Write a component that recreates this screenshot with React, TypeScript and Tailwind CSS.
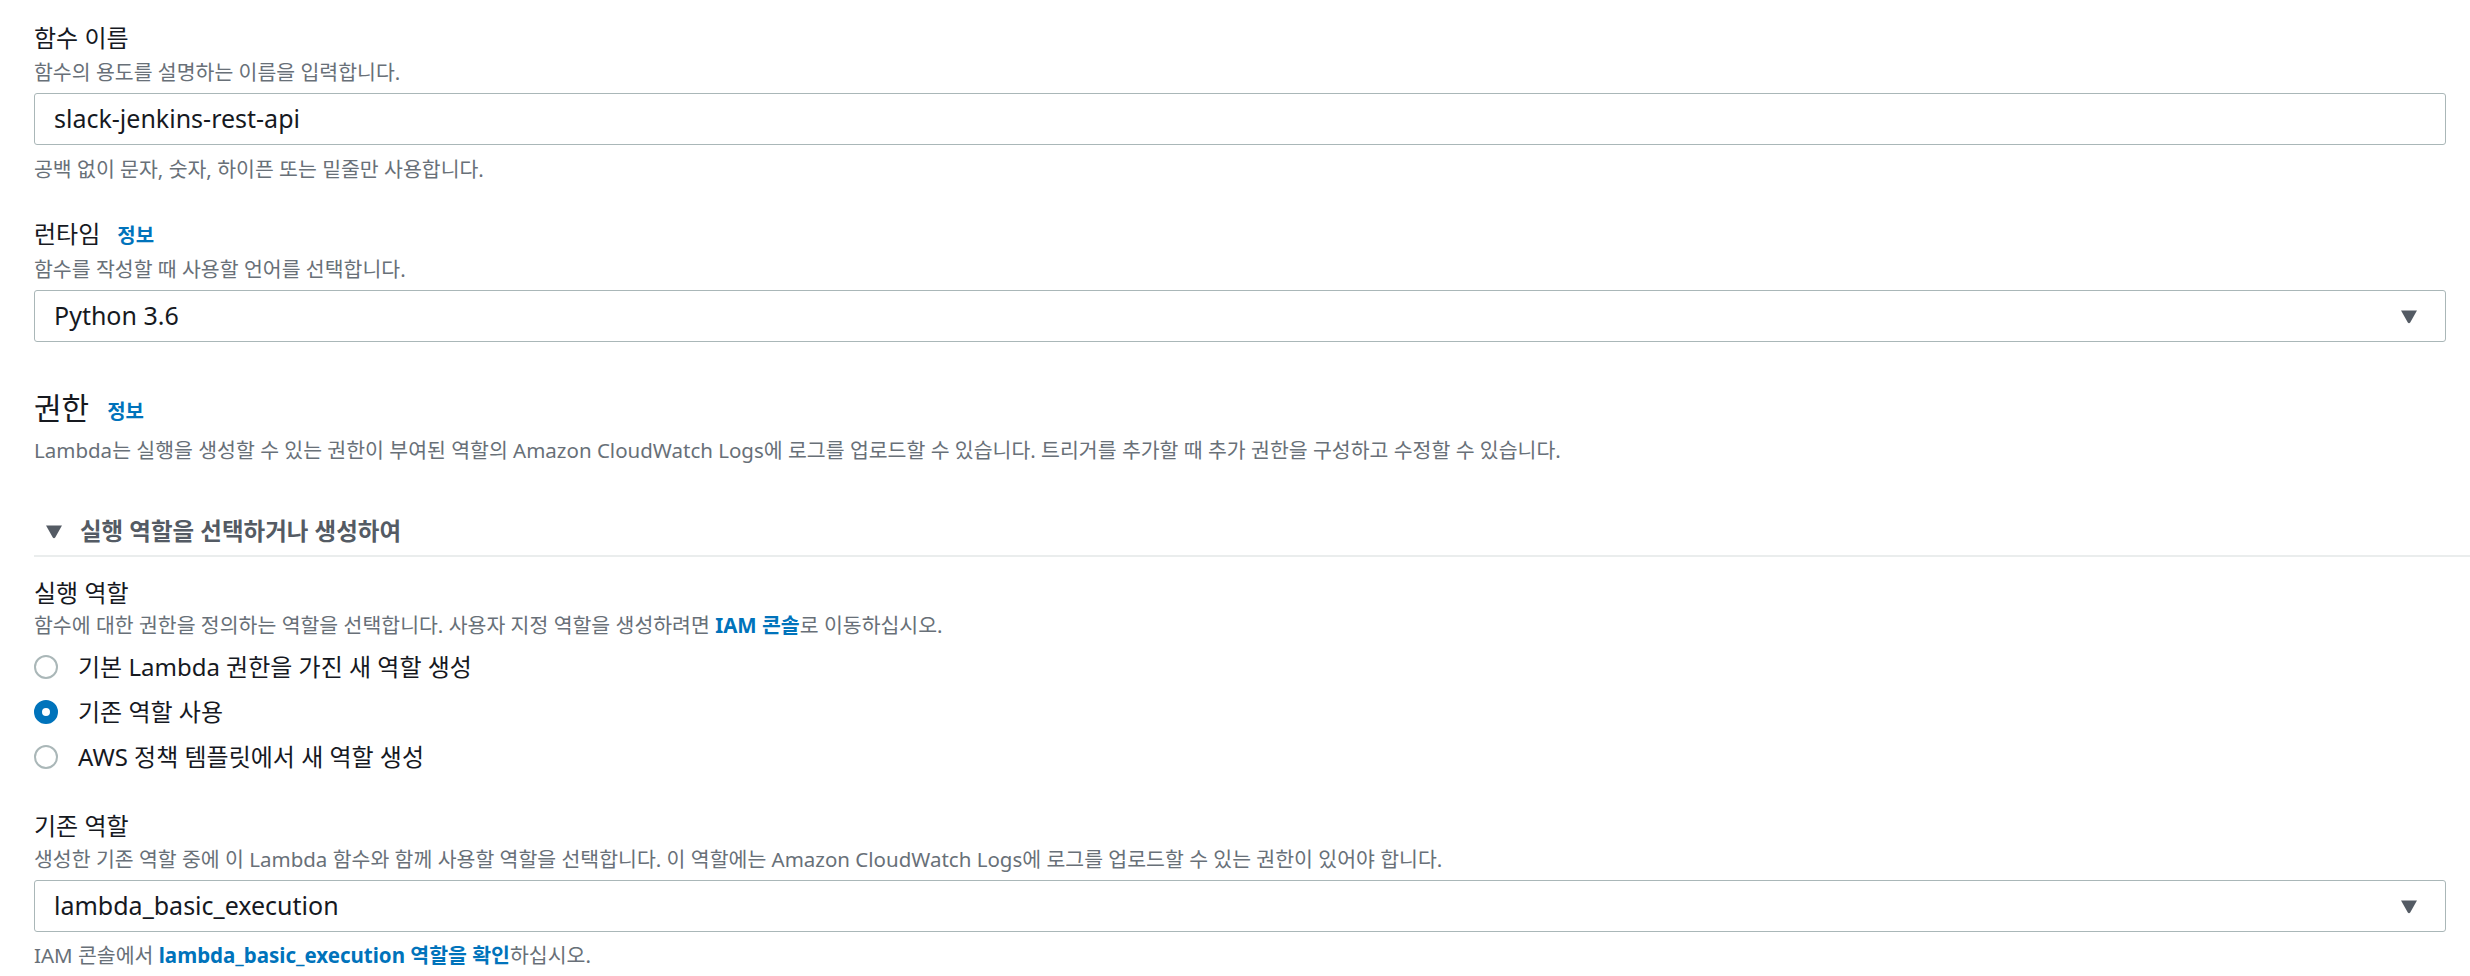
import React from "react";

const font = { fontFamily: '"Noto Sans","Noto Sans CJK KR",sans-serif' };

function Caret({ className }: { className?: string }) {
  return (
    <svg className={className} width="18" height="15" viewBox="0 0 18 15">
      <path d="M1 1.5 L17 1.5 L10.2 13.6 Q9 15 7.8 13.6 Z" fill="#545b64" />
    </svg>
  );
}

function Select({ value }: { value: string }) {
  return (
    <div className="flex h-[52px] items-center justify-between rounded-[3px] border border-[#aab7b8] bg-white pl-[19px] pr-[27px] text-[25px] text-[#16191f]">
      <span>{value}</span>
      <Caret />
    </div>
  );
}

function Radio({ checked, label }: { checked?: boolean; label: string }) {
  return (
    <div className="flex h-[45px] items-center gap-[20px]">
      {checked ? (
        <span className="block h-[24px] w-[24px] rounded-full border-[8px] border-[#0073bb] bg-white" />
      ) : (
        <span className="block h-[24px] w-[24px] rounded-full border-2 border-[#aab7b8] bg-white" />
      )}
      <span className="text-[24px] leading-[30px] text-[#16191f]">{label}</span>
    </div>
  );
}

export default function App() {
  return (
    <div className="min-h-[976px] w-[2470px] bg-white pt-[23px]" style={font}>
      <div className="pl-[34px] pr-[24px]">
        <div className="text-[24px] leading-[30px] text-[#16191f]">함수 이름</div>
        <div className="mt-[6px] text-[20.5px] leading-[26px] text-[#687078]">함수의 용도를 설명하는 이름을 입력합니다.</div>
        <div className="mt-[8px] flex h-[52px] items-center rounded-[3px] border border-[#aab7b8] pl-[19px] text-[25px] text-[#16191f]">
          slack-jenkins-rest-api
        </div>
        <div className="mt-[11px] text-[20.5px] leading-[26px] text-[#687078]">공백 없이 문자, 숫자, 하이픈 또는 밑줄만 사용합니다.</div>

        <div className="mt-[37px] flex items-baseline gap-[17px] leading-[30px]">
          <span className="text-[24px] text-[#16191f]">런타임</span>
          <span className="text-[20px] font-bold text-[#0073bb]">정보</span>
        </div>
        <div className="mt-[5px] text-[20.5px] leading-[26px] text-[#687078]">함수를 작성할 때 사용할 언어를 선택합니다.</div>
        <div className="mt-[8px]">
          <Select value="Python 3.6" />
        </div>

        <div className="mt-[48px] flex items-baseline gap-[18px] leading-[36px]">
          <span className="text-[30px] text-[#16191f]">권한</span>
          <span className="text-[20px] font-bold text-[#0073bb]">정보</span>
        </div>
        <div className="mt-[7px] text-[20.5px] leading-[26px] text-[#687078]">
          Lambda는 실행을 생성할 수 있는 권한이 부여된 역할의 Amazon CloudWatch Logs에 로그를 업로드할 수 있습니다. 트리거를 추가할 때 추가 권한을 구성하고 수정할 수 있습니다.
        </div>
      </div>

      <div className="ml-[34px] mt-[53px] flex items-center gap-[17px] border-b-2 border-[#eaeded] pb-[9px] pl-[11px]">
        <Caret />
        <span className="text-[23.5px] font-bold leading-[30px] text-[#545b64]">실행 역할을 선택하거나 생성하여</span>
      </div>

      <div className="pl-[34px] pr-[24px]">
        <div className="mt-[21px] text-[24px] leading-[30px] text-[#16191f]">실행 역할</div>
        <div className="mt-[4px] text-[20.5px] leading-[26px] text-[#687078]">
          함수에 대한 권한을 정의하는 역할을 선택합니다. 사용자 지정 역할을 생성하려면{" "}
          <span className="font-bold text-[#0073bb]">IAM 콘솔</span>로 이동하십시오.
        </div>
        <div className="mt-[6px]">
          <Radio label="기본 Lambda 권한을 가진 새 역할 생성" />
          <Radio checked label="기존 역할 사용" />
          <Radio label="AWS 정책 템플릿에서 새 역할 생성" />
        </div>

        <div className="mt-[32px] text-[24px] leading-[30px] text-[#16191f]">기존 역할</div>
        <div className="mt-[5px] text-[20.5px] leading-[26px] text-[#687078]">
          생성한 기존 역할 중에 이 Lambda 함수와 함께 사용할 역할을 선택합니다. 이 역할에는 Amazon CloudWatch Logs에 로그를 업로드할 수 있는 권한이 있어야 합니다.
        </div>
        <div className="mt-[8px]">
          <Select value="lambda_basic_execution" />
        </div>
        <div className="mt-[10px] text-[20.5px] leading-[26px] text-[#687078]">
          IAM 콘솔에서 <span className="font-bold text-[#0073bb]">lambda_basic_execution 역할을 확인</span>하십시오.
        </div>
      </div>
    </div>
  );
}
